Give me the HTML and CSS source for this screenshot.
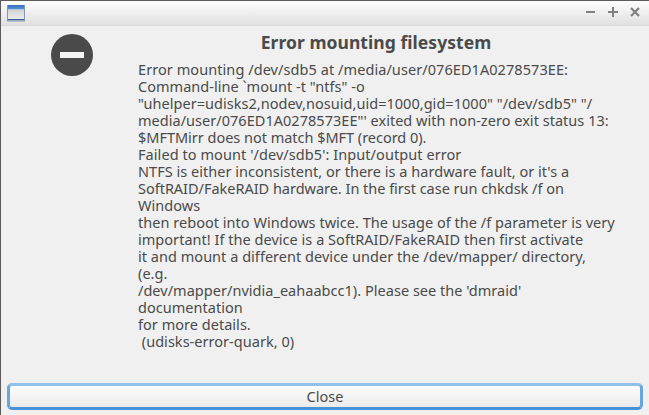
FILE: index.html
```
<!DOCTYPE html>
<html lang="en">
<head>
<meta charset="utf-8">
<title>Error mounting filesystem</title>
<link rel="stylesheet" href="styles.css">
</head>
<body>
<div class="window">
  <header class="titlebar">
    <svg class="app-icon" width="18" height="17" viewBox="0 0 18 17">
      <defs>
        <linearGradient id="blue" x2="0" y2="1"><stop stop-color="#346fb8"/><stop offset="1" stop-color="#5791d3"/></linearGradient>
        <linearGradient id="pane" x2="0" y2="1"><stop stop-color="#d3d3d3"/><stop offset="1" stop-color="#ececec"/></linearGradient>
      </defs>
      <rect x=".5" y=".5" width="17" height="15.5" fill="#b5bcc6" stroke="#8495ad"/>
      <rect x="1" y="0" width="16" height="4" fill="url(#blue)"/>
      <rect x="1" y="4" width="16" height="1" fill="#a9c9ec"/>
      <rect x="1" y="5" width="16" height="9" fill="url(#pane)"/>
      <rect x="1" y="14" width="16" height="1" fill="#365f9d"/>
    </svg>
    <svg class="controls" width="56" height="12" viewBox="0 0 56 12" fill="none" stroke="#808080" stroke-width="2">
      <path d="M0 6H9M22 6H32M27 1V11"/>
      <path d="M45 2L53 10M53 2L45 10" stroke-width="2.2"/>
    </svg>
  </header>
  <main class="content">
    <svg class="error-icon" width="42" height="42" viewBox="0 0 42 42">
      <circle cx="21" cy="21" r="21" fill="#4a4a4a"/>
      <rect x="9" y="18" width="24" height="6" fill="#f4f4f4"/>
    </svg>
    <section class="message">
      <h1>Error mounting filesystem</h1>
      <div class="details">
        <p class="wide">Error mounting /dev/sdb5 at /media/user/076ED1A0278573EE:</p>
        <p>Command-line `mount -t "ntfs" -o</p>
        <p>"uhelper=udisks2,nodev,nosuid,uid=1000,gid=1000" "/dev/sdb5" "/</p>
        <p>media/user/076ED1A0278573EE"' exited with non-zero exit status 13:</p>
        <p class="tight">$MFTMirr does not match $MFT (record 0).</p>
        <p class="wide">Failed to mount '/dev/sdb5': Input/output error</p>
        <p>NTFS is either inconsistent, or there is a hardware fault, or it's a</p>
        <p class="tight">SoftRAID/FakeRAID hardware. In the first case run chkdsk /f on</p>
        <p>Windows</p>
        <p>then reboot into Windows twice. The usage of the /f parameter is very</p>
        <p>important! If the device is a SoftRAID/FakeRAID then first activate</p>
        <p>it and mount a different device under the /dev/mapper/ directory,</p>
        <p>(e.g.</p>
        <p>/dev/mapper/nvidia_eahaabcc1). Please see the 'dmraid'</p>
        <p>documentation</p>
        <p>for more details.</p>
        <p> (udisks-error-quark, 0)</p>
      </div>
    </section>
  </main>
  <footer class="actions"><button class="close">Close</button></footer>
</div>
</body>
</html>
```
FILE: styles.css
```
* { box-sizing: border-box; }
body { margin: 0; }
.window {
  width: 649px; height: 415px; display: flex; flex-direction: column; overflow: hidden;
  background: #f0f0f0; border-top: 1px solid #5c5a5b; border-left: 1px solid #5c5a5b;
  color: #4a4a4a; font: 14.5px/17px "Noto Sans", sans-serif;
}
.titlebar {
  height: 25px; flex: none; display: flex; justify-content: space-between; align-items: flex-start;
  padding: 4px 7px 0 6px; background: linear-gradient(#fdfdfd, #e0e0e0); border-bottom: 1px solid #dcdcdc;
}
.controls { margin-top: 1px; }
.content { flex: 1; display: flex; padding-left: 50px; }
.error-icon { margin-top: 8px; flex: none; }
.message { width: 476px; margin-left: 45px; }
h1 { margin: 6px 0 0; height: 29px; font-size: 17.5px; line-height: 20px; text-align: center; letter-spacing: .05px; }
p { margin: 0; height: 17px; white-space: pre; letter-spacing: .03px; }
.wide { letter-spacing: .07px; }
.tight { letter-spacing: -.02px; }
.actions { padding: 0 6px 5px; flex: none; }
.close {
  display: block; width: 100%; height: 27px; padding: 0; border: 3px solid #67a6df;
  border-top-color: #91c0e9; border-bottom-color: #4792d9; border-radius: 5px;
  background: linear-gradient(#fdfdfd, #ebebeb); color: inherit; font: inherit; line-height: 17px;
}
```
